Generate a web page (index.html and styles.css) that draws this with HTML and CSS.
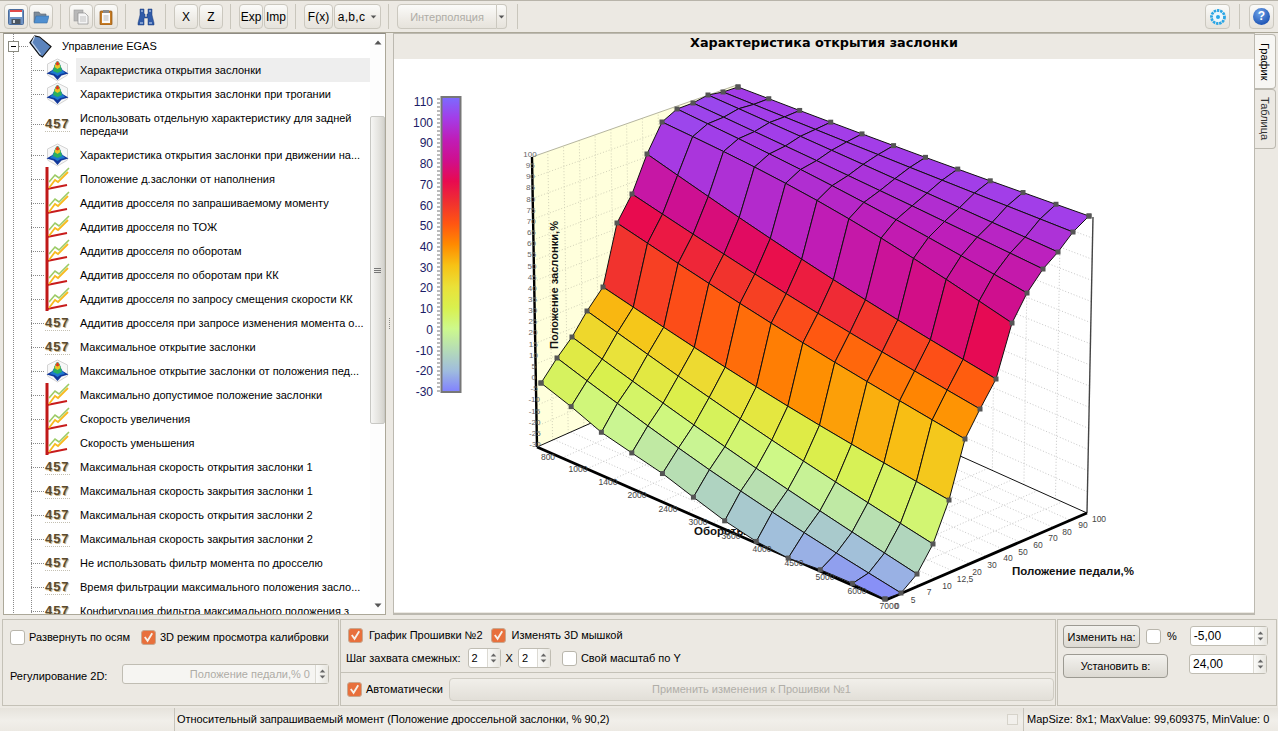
FILE: index.html
```html
<!DOCTYPE html>
<html lang="ru">
<head>
<meta charset="utf-8">
<title>Характеристика открытия заслонки</title>
<link rel="stylesheet" href="styles.css">
</head>
<body>
<svg class="defs" width="0" height="0" aria-hidden="true">
  <defs>
    <symbol id="i-surface" viewBox="0 0 24 24">
      <polygon points="12,1 22,6 22,17 12,23 2,17 2,6" fill="#f7f7f7" stroke="#d4d4d4"/>
      <path d="M1 15.500 L7 12 L12 4 L17 12 L23 15.500 L16 17.500 L12 22 L8 17.500 Z" fill="#12389a"/>
      <path d="M4.500 15 L8 11 Q10 3 12 3 Q14 3 16 11 L19.500 15 L15 16 L12 18 L9 16 Z" fill="#1c78d0"/>
      <path d="M7.500 13 Q9.500 3.500 12 3.500 Q14.500 3.500 16.500 13 L12 15 Z" fill="#28b060"/>
      <path d="M9 9 Q10.500 3.500 12 3.500 Q13.500 3.500 15 9 L12 11 Z" fill="#e8c428"/>
      <path d="M10.200 6.500 Q11 3.500 12 3.500 Q13 3.500 13.800 6.500 L12 7.500 Z" fill="#e03820"/>
    </symbol>
    <symbol id="i-graph" viewBox="0 0 25 24">
      <path d="M2 0V24" stroke="#c01818" stroke-width="3"/>
      <path d="M2 22 L22 18" stroke="#c81c1c" stroke-width="2.200"/>
      <path d="M4 21 L10 13 L13 15 L23 5" stroke="#f7bb20" stroke-width="1.800" fill="none"/>
      <path d="M4 15 L10 8 L14 11 L24 1" stroke="#9ccb66" stroke-width="1.600" fill="none"/>
    </symbol>
    <symbol id="i-tag" viewBox="0 0 24 24">
      <path d="M1 8 L6 1 L11 2 L23 12 L14 23 L11 21 Z" fill="#5b84bd" stroke="#111" stroke-width="1.200"/>
      <path d="M6 1 L3 8 L12 20" fill="none" stroke="#c3d4ea" stroke-width="1.200"/>
    </symbol>
    <symbol id="i-save" viewBox="0 0 16 16">
      <rect x=".5" y=".5" width="15" height="15" rx="1" fill="#6f93c4" stroke="#4a6c9c"/>
      <rect x="2" y="1" width="12" height="7" fill="#fff"/><rect x="2" y="1" width="12" height="2" fill="#e24a4a"/>
      <rect x="3.500" y="10" width="9" height="5" fill="#4b5560"/><rect x="5" y="11" width="2" height="3" fill="#cfd6dc"/>
    </symbol>
    <symbol id="i-open" viewBox="0 0 16 16">
      <path d="M1 3 H6 L7.500 5 H13 V13 H1 Z" fill="#7e8c9a" stroke="#5a6672" stroke-width=".6"/>
      <path d="M3 7 H16 L14 14 H1 Z" fill="#4f8fd0" stroke="#3a6ea5" stroke-width=".6"/>
    </symbol>
    <symbol id="i-copy" viewBox="0 0 16 16">
      <rect x="1" y="1" width="9" height="11" fill="#b8b8b8" stroke="#999" stroke-width=".6"/>
      <path d="M5 4 H12 L15 7 V15 H5 Z" fill="#f4f4f4" stroke="#8e8e8e" stroke-width=".7"/>
      <path d="M7 8H13M7 10H13M7 12H13" stroke="#aaa" stroke-width=".7"/>
    </symbol>
    <symbol id="i-paste" viewBox="0 0 16 16">
      <rect x="2" y="2" width="12" height="14" rx="1" fill="#c77c24" stroke="#8c5412" stroke-width=".7"/>
      <rect x="4" y="4" width="8" height="10" fill="#fafafa"/>
      <rect x="5" y="1" width="6" height="3" fill="#8a8a8a"/>
      <path d="M5.500 7H10.500M5.500 9H10.500M5.500 11H10.500" stroke="#999" stroke-width=".7"/>
    </symbol>
    <symbol id="i-binoc" viewBox="0 0 18 18">
      <path d="M3 1 H7 V6 H8 V9 H10 V6 H11 V1 H15 V7 L17 15 V17 H11 V10 H7 V17 H1 V15 L3 7 Z" fill="#2f5aa8" stroke="#1e3d78" stroke-width=".5"/>
      <path d="M3 15H6M12 15H15M4 3H6M12 3H14" stroke="#cfe0f5" stroke-width="1.200"/>
    </symbol>
    <symbol id="i-gear" viewBox="0 0 18 18">
      <circle cx="9" cy="9" r="6.500" fill="none" stroke="#2aa6e6" stroke-width="2.800" stroke-dasharray="2.400 .8"/>
      <circle cx="9" cy="9" r="5" fill="#eaf6fd"/>
      <circle cx="9" cy="9" r="2" fill="#2aa6e6"/>
    </symbol>
    <symbol id="i-check" viewBox="0 0 14 14">
      <path d="M3 6.500 L6 10.500 L11 2.500" fill="none" stroke="#f6f1ea" stroke-width="2"/>
    </symbol>
    <symbol id="i-up" viewBox="0 0 8 5"><path d="M4 .5 L7.500 4.500 H.5 Z"/></symbol>
    <symbol id="i-down" viewBox="0 0 8 5"><path d="M.5 .5 H7.500 L4 4.500 Z"/></symbol>
  </defs>
</svg>

<div class="app">
  <header class="toolbar">
    <div class="tgroup">
      <button class="tbtn"><svg class="ticon"><use href="#i-save"/></svg></button>
      <button class="tbtn"><svg class="ticon"><use href="#i-open"/></svg></button>
    </div>
    <span class="tsep"></span>
    <div class="tgroup">
      <button class="tbtn"><svg class="ticon"><use href="#i-copy"/></svg></button>
      <button class="tbtn"><svg class="ticon"><use href="#i-paste"/></svg></button>
    </div>
    <span class="tsep"></span>
    <div class="tgroup"><button class="tbtn flat"><svg class="ticon big"><use href="#i-binoc"/></svg></button></div>
    <span class="tsep"></span>
    <div class="tgroup">
      <button class="tbtn">X</button><button class="tbtn">Z</button>
    </div>
    <span class="tsep"></span>
    <div class="tgroup">
      <button class="tbtn">Exp</button><button class="tbtn">Imp</button>
    </div>
    <span class="tsep"></span>
    <div class="tgroup">
      <button class="tbtn fx">F(x)</button>
      <button class="tbtn abc">a,b,c<svg class="caret"><use href="#i-down"/></svg></button>
    </div>
    <span class="tsep"></span>
    <div class="tgroup tight">
      <button class="tbtn interp">Интерполяция</button>
      <button class="tbtn interp-dd"><svg class="caret"><use href="#i-down"/></svg></button>
    </div>
    <span class="tsep after-interp"></span>
    <span class="tspacer"></span>
    <button class="tbtn wide25"><svg class="ticon big"><use href="#i-gear"/></svg></button>
    <span class="tsep end"></span>
    <button class="tbtn wide25"><span class="help">?</span></button>
  </header>

  <main class="main">
    <section class="tree">
      <div class="tree-scroll">
        <div class="root-row">
          <span class="expander"></span><span class="branch short"></span>
          <svg class="tag"><use href="#i-tag"/></svg>
          <span class="root-label">Управление EGAS</span>
        </div>
        <ul class="tree-list">
          <li class="row selected"><span class="branch"></span><svg class="ico"><use href="#i-surface"/></svg><span class="label">Характеристика открытия заслонки</span></li>
          <li class="row"><span class="branch"></span><svg class="ico"><use href="#i-surface"/></svg><span class="label">Характеристика открытия заслонки при трогании</span></li>
          <li class="row tall"><span class="branch"></span><span class="num">457</span><span class="label">Использовать отдельную характеристику для задней передачи</span></li>
          <li class="row"><span class="branch"></span><svg class="ico"><use href="#i-surface"/></svg><span class="label">Характеристика открытия заслонки при движении на...</span></li>
          <li class="row"><span class="branch"></span><svg class="ico"><use href="#i-graph"/></svg><span class="label">Положение д.заслонки от наполнения</span></li>
          <li class="row"><span class="branch"></span><svg class="ico"><use href="#i-graph"/></svg><span class="label">Аддитив дросселя по запрашиваемому моменту</span></li>
          <li class="row"><span class="branch"></span><svg class="ico"><use href="#i-graph"/></svg><span class="label">Аддитив дросселя по ТОЖ</span></li>
          <li class="row"><span class="branch"></span><svg class="ico"><use href="#i-graph"/></svg><span class="label">Аддитив дросселя по оборотам</span></li>
          <li class="row"><span class="branch"></span><svg class="ico"><use href="#i-graph"/></svg><span class="label">Аддитив дросселя по оборотам при КК</span></li>
          <li class="row"><span class="branch"></span><svg class="ico"><use href="#i-graph"/></svg><span class="label">Аддитив дросселя по запросу смещения скорости КК</span></li>
          <li class="row"><span class="branch"></span><span class="num">457</span><span class="label">Аддитив дросселя при запросе изменения момента о...</span></li>
          <li class="row"><span class="branch"></span><span class="num">457</span><span class="label">Максимальное открытие заслонки</span></li>
          <li class="row"><span class="branch"></span><svg class="ico"><use href="#i-surface"/></svg><span class="label">Максимальное открытие заслонки от положения пед...</span></li>
          <li class="row"><span class="branch"></span><svg class="ico"><use href="#i-graph"/></svg><span class="label">Максимально допустимое положение заслонки</span></li>
          <li class="row"><span class="branch"></span><svg class="ico"><use href="#i-graph"/></svg><span class="label">Скорость увеличения</span></li>
          <li class="row"><span class="branch"></span><svg class="ico"><use href="#i-graph"/></svg><span class="label">Скорость уменьшения</span></li>
          <li class="row"><span class="branch"></span><span class="num">457</span><span class="label">Максимальная скорость открытия заслонки 1</span></li>
          <li class="row"><span class="branch"></span><span class="num">457</span><span class="label">Максимальная скорость закрытия заслонки 1</span></li>
          <li class="row"><span class="branch"></span><span class="num">457</span><span class="label">Максимальная скорость открытия заслонки 2</span></li>
          <li class="row"><span class="branch"></span><span class="num">457</span><span class="label">Максимальная скорость закрытия заслонки 2</span></li>
          <li class="row"><span class="branch"></span><span class="num">457</span><span class="label">Не использовать фильтр момента по дросселю</span></li>
          <li class="row"><span class="branch"></span><span class="num">457</span><span class="label">Время фильтрации максимального положения засло...</span></li>
          <li class="row"><span class="branch"></span><span class="num">457</span><span class="label">Конфигурация фильтра максимального положения з</span></li>
        </ul>
      </div>
      <div class="scrollbar">
        <svg class="sb-arrow"><use href="#i-up"/></svg>
        <div class="sb-track"><div class="sb-thumb"><span class="grip"></span></div></div>
        <svg class="sb-arrow"><use href="#i-down"/></svg>
      </div>
    </section>

    <div class="splitter"><span class="split-dots"></span></div>

    <section class="plot">
      <h1 class="plot-title">Характеристика открытия заслонки</h1>
      <svg id="chart" class="chart" viewBox="394 59 860 553" xmlns="http://www.w3.org/2000/svg"></svg>
    </section>

    <nav class="tabs">
      <span class="tab active">График</span>
      <span class="tab">Таблица</span>
    </nav>
  </main>

  <section class="bottom">
    <div class="group g-left">
      <div class="line l1">
        <label class="check"><span class="cb"></span>Развернуть по осям</label>
        <label class="check"><span class="cb on"><svg><use href="#i-check"/></svg></span>3D режим просмотра калибровки</label>
      </div>
      <div class="line l2">
        <span class="reg-label">Регулирование 2D:</span>
        <span class="spin wide disabled"><span class="spin-val right">Положение педали,% 0</span><span class="arrows"><svg><use href="#i-up"/></svg><svg><use href="#i-down"/></svg></span></span>
      </div>
    </div>
    <div class="g-mid">
      <div class="group g-mid-top">
        <div class="line m1">
          <label class="check"><span class="cb on"><svg><use href="#i-check"/></svg></span>График Прошивки №2</label>
          <label class="check"><span class="cb on"><svg><use href="#i-check"/></svg></span>Изменять 3D мышкой</label>
        </div>
        <div class="line m2">
          <span class="step-label">Шаг захвата смежных:</span>
          <span class="spin small"><span class="spin-val">2</span><span class="arrows"><svg><use href="#i-up"/></svg><svg><use href="#i-down"/></svg></span></span>
          <span>X</span>
          <span class="spin small"><span class="spin-val">2</span><span class="arrows"><svg><use href="#i-up"/></svg><svg><use href="#i-down"/></svg></span></span>
          <label class="check own"><span class="cb"></span>Свой масштаб по Y</label>
        </div>
      </div>
      <div class="group g-mid-bot">
        <label class="check"><span class="cb on"><svg><use href="#i-check"/></svg></span>Автоматически</label>
        <button class="apply">Применить изменения к Прошивки №1</button>
      </div>
    </div>
    <div class="group g-right">
      <div class="line r1">
        <button class="act change">Изменить на:</button>
        <label class="check pct"><span class="cb"></span>%</label>
        <span class="spin num-spin"><span class="spin-val">-5,00</span><span class="arrows"><svg><use href="#i-up"/></svg><svg><use href="#i-down"/></svg></span></span>
      </div>
      <div class="line r2">
        <button class="act setto">Установить в:</button>
        <span class="spin num-spin"><span class="spin-val">24,00</span><span class="arrows"><svg><use href="#i-up"/></svg><svg><use href="#i-down"/></svg></span></span>
      </div>
    </div>
  </section>

  <footer class="status">
    <span class="st-a"></span>
    <span class="st-b">Относительный запрашиваемый момент (Положение дроссельной заслонки, % 90,2)</span>
    <span class="st-box"></span>
    <span class="st-c">MapSize: 8x1; MaxValue: 99,609375, MinValue: 0</span>
  </footer>
</div>
<script src="chart.js"></script>
</body>
</html>
```

FILE: styles.css
```css
* { box-sizing: border-box; }
html, body { margin: 0; height: 100%; }
body {
  font: 11px/13px "Liberation Sans", "Noto Sans", sans-serif;
  color: #000;
  background: #ece9e3;
  overflow: hidden;
}
.defs { display: block; height: 0; }
.app { width: 1278px; height: 731px; display: flex; flex-direction: column; }

/* toolbar */
.toolbar {
  height: 33px; flex: none; display: flex; align-items: flex-start;
  padding: 3px 4px 0 4px; border-top: 1px solid #b8b4aa; border-bottom: 1px solid #aca899;
  background: #ece9e3;
}
.tgroup { display: flex; gap: 1px; }
.tgroup.tight { gap: 0; }
.tsep { width: 1px; height: 25px; background: #c9c6bc; margin: 0 8px 0 7px; flex: none; }
.tsep.after-interp { margin-left: 10px; }
.tsep.end { margin: 0 9px; }
.tspacer { flex: 1; }
.tbtn {
  width: 24px; height: 25px; padding: 0; border: 1px solid #cbc8bf; border-radius: 4px;
  background: linear-gradient(#fbfbf9, #ece9e3 70%, #e6e3dc);
  font: 12px "Liberation Sans", sans-serif; color: #000;
  display: flex; align-items: center; justify-content: center;
}
.tbtn.wide25 { width: 25px; }
.tbtn.flat { border-color: transparent; background: none; }
.tbtn.fx { width: 29px; }
.tbtn.abc { width: 47px; gap: 5px; letter-spacing: .3px; }
.tbtn.interp { width: 100px; color: #aeaca6; border-radius: 4px 0 0 4px; font-size: 11px; }
.tbtn.interp-dd { width: 10px; border-left: 0; border-radius: 0 4px 4px 0; }
.ticon { width: 16px; height: 16px; }
.ticon.big { width: 18px; height: 18px; }
.caret { width: 7px; height: 4px; fill: #555; }
.help {
  width: 17px; height: 17px; border-radius: 50%; color: #fff; font-weight: bold; font-size: 12px; line-height: 17px;
  background: radial-gradient(circle at 40% 30%, #6fa3e8, #1f55b5 75%);
}

/* main */
.main { height: 582px; flex: none; display: flex; padding-left: 3px; }
.tree {
  width: 383px; flex: none; display: flex; background: #fff;
  border: 1px solid #aca899; border-top-color: #8f8c84; overflow: hidden;
}
.tree-scroll { flex: 1; min-width: 0; overflow: hidden; background-image: repeating-linear-gradient(#8a8a8a 0 1px, transparent 1px 2px), repeating-linear-gradient(#8a8a8a 0 1px, transparent 1px 2px); background-size: 1px 100%, 1px 100%; background-position: 9px 0, 27px 22px; background-repeat: no-repeat; }
.root-row { height: 24px; display: flex; align-items: center; padding-left: 4px; }
.expander {
  width: 11px; height: 11px; border: 1px solid #8a8a80; background: linear-gradient(90deg, transparent 2px, #000 2px, #000 7px, transparent 7px) center / 100% 1px no-repeat #fff;
  flex: none;
}
.branch { width: 13px; flex: none; border-top: 1px dotted #888; margin-left: 27px; margin-right: 1px; }
.branch.short { width: 9px; margin-left: 0; margin-right: 1px; }
.tag { width: 23px; height: 23px; flex: none; margin-right: 10px; }
.root-label { white-space: nowrap; }
.tree-list { list-style: none; margin: 0; padding: 0; }
.row { height: 24px; display: flex; align-items: center; }
.row.tall { height: 37px; }
.ico { width: 25px; height: 24px; flex: none; }
.num {
  width: 25px; flex: none; font: bold 13px/13px "Liberation Sans", sans-serif; letter-spacing: .9px; color: #5a4a2e;
  text-shadow: 1px 1px 0 #cdbd94; border-bottom: 1px dotted #c4c0b2; white-space: nowrap; padding-bottom: 1px;
}
.label { flex: 1; min-width: 0; padding-left: 4px; margin-left: 6px; height: 100%; display: flex; align-items: center; white-space: normal; }
.row.selected .label { background: #eeeeee; }

.scrollbar { width: 15px; flex: none; display: flex; flex-direction: column; align-items: center; background: #fdfdfd; }
.sb-arrow { width: 8px; height: 5px; fill: #555; margin: 6px 0; flex: none; }
.sb-track { flex: 1; width: 100%; padding-top: 65px; }
.sb-thumb { height: 308px; border: 1px solid #c8c8c4; border-radius: 2px; background: linear-gradient(90deg, #f6f6f4, #e4e3df 60%, #d4d3cd); display: flex; align-items: center; justify-content: center; }
.grip { width: 7px; height: 5px; border-top: 1px solid #777; border-bottom: 1px solid #777; background: linear-gradient(#777, #777) center / 100% 1px no-repeat; }

.splitter { width: 7px; flex: none; display: flex; align-items: center; justify-content: center; }
.split-dots { width: 1px; height: 12px; background: repeating-linear-gradient(#8a8a84 0 1px, transparent 1px 2px); }

.plot { width: 862px; flex: none; border: 1px solid #bcb9b0; border-bottom-width: 2px; display: flex; flex-direction: column; }
.plot-title {
  height: 25px; flex: none; margin: 0; text-align: center; background: #ece9e3;
  font: bold 12.800px/18px "DejaVu Sans", sans-serif;
}
.chart { width: 860px; height: 553px; display: block; background: #fff; flex: none; }

.tabs { width: 21px; flex: none; display: flex; flex-direction: column; padding-top: 1px; }
.tab {
  writing-mode: vertical-rl; text-align: center; border: 1px solid #bcb9b0; border-left: 0; border-radius: 0 4px 4px 0;
  background: #ece9e3; height: 60px; line-height: 20px; color: #333;
}
.tab.active { height: 55px; background: #f7f6f3; color: #000; }

/* bottom */
.bottom { height: 93px; flex: none; display: flex; gap: 1px; padding: 4px 1px 2px 2px; }
.group { border: 1px solid #c4c1b7; }
.line { display: flex; align-items: center; }
.check { display: flex; align-items: center; gap: 4px; white-space: nowrap; }
.cb {
  width: 15px; height: 15px; flex: none; background: #fff; border: 1px solid #b9b6ac; border-radius: 3px; display: block;
}
.cb.on { background: #e8703c; border-color: #c8a890; }
.cb svg { width: 13px; height: 13px; display: block; }
.g-left { width: 337px; padding: 10px 8px 0 7px; }
.l1 { gap: 11px; }
.l1 .check { letter-spacing: -.04px; }
.l2 { margin-top: 19px; justify-content: space-between; padding-right: 1px; }
.reg-label { margin-top: 4px; }
.spin {
  display: flex; align-items: stretch; height: 20px; background: #fff; border: 1px solid #c0bdb3; border-radius: 3px;
}
.spin.disabled { background: #f6f5f2; color: #aeaca6; }
.spin-val { flex: 1; padding: 3px 2px 0 3px; white-space: nowrap; }
.spin-val.right { text-align: right; padding-right: 5px; }
.arrows { width: 13px; flex: none; border-left: 1px solid #dcdad3; display: flex; flex-direction: column; align-items: center; justify-content: center; gap: 2px; background: linear-gradient(90deg, #fafaf8, #e8e6e0); }
.arrows svg { width: 7px; height: 4px; fill: #666; display: block; }
.spin.wide { width: 207px; }
.spin.small { width: 33px; flex: none; }
.g-mid { width: 716px; display: flex; flex-direction: column; }
.g-mid-top { height: 53px; padding: 8px 6px 0 7px; border-bottom: 0; }
.m1 { gap: 8px; }
.m1 .check { gap: 6px; }
.m2 { margin-top: 5px; gap: 5px; }
.step-label { margin: 0 2px 0 -2px; white-space: nowrap; }
.own { margin-left: 6px; }
.g-mid-bot { flex: 1; display: flex; align-items: center; padding: 0 1px 0 6px; gap: 6px; }
.apply {
  flex: 1; height: 23px; border: 1px solid #cfccc3; border-radius: 4px; color: #b0aea8;
  background: linear-gradient(#f1efea, #e2dfd8); font: 11px "Liberation Sans", sans-serif;
}
.g-right { width: 220px; padding: 5px 9px 0 5px; }
.r1 { gap: 6px; height: 23px; }
.r2 { margin-top: 6px; gap: 21px; align-items: flex-start; }
.act {
  height: 24px; padding: 0; border: 1px solid #9c9a92; border-radius: 4px; background: linear-gradient(#f3f2ee, #dcd9d2);
  font: 11px "Liberation Sans", sans-serif; color: #000; flex: none;
}
.act.change { width: 77px; height: 23px; }
.act.setto { width: 105px; }
.pct { gap: 6px; margin-right: 7px; }
.num-spin { width: 78px; flex: none; font-size: 12px; }
.r1 .num-spin { margin-bottom: 2px; }

/* status */
.status { height: 23px; flex: none; display: flex; align-items: center; background: linear-gradient(#e6e3dc, #f1efea 55%, #ece9e3); }
.st-a { width: 175px; height: 100%; border-right: 1px solid #c6c3ba; flex: none; }
.st-b { flex: 1; padding-left: 2px; white-space: nowrap; letter-spacing: -.05px; }
.st-box { width: 11px; height: 11px; border: 1px solid #d6d3ca; background: #f2f0ec; flex: none; margin-right: 5px; }
.st-c { width: 255px; flex: none; height: 100%; border-left: 1px solid #c6c3ba; padding: 5px 0 0 3px; white-space: nowrap; }

/* chart text */
.t-bar { font: 12px "Liberation Sans", sans-serif; fill: #1c1c66; }
.t-tick { font: 8.500px "Liberation Sans", sans-serif; fill: #444; }
.t-ytick { font: 8px "Liberation Sans", sans-serif; fill: #666; }
.t-axis { font: bold 11.500px "Liberation Sans", sans-serif; fill: #111; }
.t-axis-v { font: bold 11.100px "Liberation Sans", sans-serif; fill: #111; }
```

FILE: chart.js
```js
(function () {
  var NS = 'http://www.w3.org/2000/svg';
  var svg = document.getElementById('chart');
  function el(name, attrs, parent, text) {
    var e = document.createElementNS(NS, name);
    for (var k in attrs) e.setAttribute(k, attrs[k]);
    if (text !== undefined) e.textContent = text;
    (parent || svg).appendChild(e);
    return e;
  }
  var stops = [[-30,[128,128,255]],[-20,[159,188,222]],[-10,[181,220,182]],[0,[205,249,140]],[10,[217,240,78]],[20,[234,225,56]],[30,[247,194,21]],[40,[255,138,0]],[50,[255,85,18]],[60,[240,48,48]],[70,[232,10,80]],[80,[207,15,142]],[90,[191,29,184]],[100,[163,61,232]],[110,[123,108,255]]];
  function color(v) {
    v = Math.max(-30, Math.min(110, v));
    for (var i = 0; i < stops.length - 1; i++) {
      if (v <= stops[i + 1][0]) {
        var t = (v - stops[i][0]) / 10, a = stops[i][1], b = stops[i + 1][1];
        return 'rgb(' + [0, 1, 2].map(function (n) { return Math.round(a[n] + (b[n] - a[n]) * t); }).join(',') + ')';
      }
    }
    return 'rgb(123,108,255)';
  }
  function lerp(p, q, t) { return [p[0] + (q[0] - p[0]) * t, p[1] + (q[1] - p[1]) * t]; }
  function pts(a) { return a.map(function (p) { return p[0].toFixed(1) + ',' + p[1].toFixed(1); }).join(' '); }

  /* colour bar */
  var grad = el('linearGradient', { id: 'bar', x1: 0, y1: 0, x2: 0, y2: 1 }, el('defs', {}));
  stops.slice().reverse().forEach(function (s, i) {
    el('stop', { offset: i / 14, 'stop-color': 'rgb(' + s[1].join(',') + ')' }, grad);
  });
  el('rect', { x: 441.5, y: 97, width: 19, height: 295, fill: 'url(#bar)', stroke: '#777', 'stroke-width': 2 });
  for (var y = 98; y < 392; y += 4) el('rect', { x: 437, y: y, width: 3, height: 2, fill: '#bbb' });
  for (var v = 110, n = 0; v >= -30; v -= 10, n++) {
    el('text', { x: 433, y: 106 + n * 20.72, 'text-anchor': 'end', class: 't-bar' }, null, String(v));
  }

  /* box corners */
  var A = [537, 447], B = [886, 600], C = [1087, 513], D = [740, 357], At = [532, 157], Dt = [737, 85], Ct = [1093, 217];
  el('polygon', { points: pts([A, At, Dt, D]), fill: '#ffffdc' });
  var dot = { stroke: '#c8c8c8', 'stroke-width': 1, 'stroke-dasharray': '1 2', fill: 'none' };
  function line(p, q, a) { var o = { x1: p[0], y1: p[1], x2: q[0], y2: q[1] }; for (var k in a) o[k] = a[k]; return el('line', o); }
  var dotY = { stroke: '#d2d2b8', 'stroke-width': 1, 'stroke-dasharray': '1 2' };
  var k, t;
  for (k = 1; k < 14; k++) { t = k / 14; line(lerp(A, At, t), lerp(D, Dt, t), dotY); }
  for (k = 1; k < 13; k++) { t = k / 13; line(lerp(A, D, t), lerp(At, Dt, t), dotY); }
  for (k = 1; k < 14; k++) { t = k / 14; line(lerp(C, Ct, t), lerp(D, Dt, t), dot); }
  for (k = 1; k < 11; k++) { t = k / 11; line(lerp(C, D, t), lerp(Ct, Dt, t), dot); }
  for (k = 1; k < 14; k++) { t = k / 14; line(lerp(A, B, t), lerp(D, C, t), dot); }
  for (k = 1; k < 12; k++) { t = k / 12; line(lerp(A, D, t), lerp(B, C, t), dot); }
  line(Dt, At, { stroke: '#b5b5a0', 'stroke-width': 1 });
  line(A, D, { stroke: '#111', 'stroke-width': 1 });
  line(C, D, { stroke: '#111', 'stroke-width': 1 });
  line(Ct, C, { stroke: '#444', 'stroke-width': 1.400 });
  line(A, At, { stroke: '#000', 'stroke-width': 2.400 });
  line(A, B, { stroke: '#000', 'stroke-width': 2.800 });
  line(B, C, { stroke: '#000', 'stroke-width': 2.800 });

  /* axis titles sit under the surface */
  el('text', { x: 1012, y: 575, class: 't-axis' }, null, 'Положение педали,%');
  el('text', { x: 694, y: 535, class: 't-axis' }, null, 'Обороты');
  el('text', { transform: 'translate(558,349) rotate(-90)', class: 't-axis-v' }, null, 'Положение заслонки,%');

  /* surface */
  var L = [[541,383],[557,358],[572,337],[587,311],[603,287],[617,223],[632,194],[647,154],[662,122],[677,109],[693,103],[708,95],[723,92],[738,87]];
  var R = [[885,599],[901,593],[917,574],[933,544],[949,500],[965,439],[980,409],[996,379],[1012,323],[1027,293],[1043,269],[1058,252],[1073,232],[1089,216]];
  var front = [0,4,10,11,12,16,20,21,18,10,4,0];
  var amp = [0,5,2,2,3,2,2,3,-13,-7,-3,-2,-1,0];
  var P = [], V = [];
  var I, J;
  for (I = 0; I < 12; I++) {
    P[I] = []; V[I] = [];
    var ti = I / 11, sh = Math.sin(Math.PI * ti);
    for (J = 0; J < 14; J++) {
      var p = lerp(L[J], R[J], ti);
      var dy = J === 0 ? front[I] : amp[J] * sh;
      var dx = -4 * sh;
      var q = [p[0] + dx, p[1] + dy];
      P[I][J] = q;
      var gy = 447 + ti * 156 - (J / 13) * 90;
      V[I][J] = -30 + (gy - q[1]) / (2.080 + 0.200 * ti);
    }
  }
  for (J = 13; J > 0; J--) {
    for (I = 0; I < 11; I++) {
      var upper = (V[I][J] + V[I + 1][J]) / 2;
      el('polygon', { points: pts([P[I][J], P[I + 1][J], P[I + 1][J - 1], P[I][J - 1]]), fill: color(upper), stroke: '#111', 'stroke-width': 1, 'stroke-linejoin': 'round' });
    }
  }
  function mark(p) { el('rect', { x: p[0] - 2.5, y: p[1] - 2.5, width: 5, height: 5, fill: '#555' }); }
  for (I = 0; I < 12; I++) { mark(P[I][0]); mark(P[I][13]); }
  for (J = 0; J < 14; J++) { mark(P[0][J]); mark(P[11][J]); }

  /* tick labels */
  for (var val = 100, m = 0; val >= -30; val -= 5, m++) {
    var f = m / 26;
    el('text', { x: 530 + f * 5, y: 157 + f * 290, 'text-anchor': 'middle', class: 't-ytick' }, null, String(val));
  }
  [['800',548,460],['1000',578,472],['1400',608,485],['2000',637,498],['2400',668,512],['3000',698,525],['3600',731,539],['4000',762,552],['4500',794,566],['5000',825,580],['6000',857,594],['7000',889,609]].forEach(function (l) {
    el('text', { x: l[1], y: l[2], 'text-anchor': 'middle', class: 't-tick' }, null, l[0]);
  });
  [['0',897,609],['5',913,603],['7',929,595],['10',947,589],['12,5',965,582],['20',977,575],['30',992,568],['40',1008,561],['50',1023,555],['60',1038,548],['70',1053,541],['80',1067,535],['90',1083,528],['100',1099,522]].forEach(function (l) {
    el('text', { x: l[1], y: l[2], 'text-anchor': 'middle', class: 't-tick' }, null, l[0]);
  });
})();
```
